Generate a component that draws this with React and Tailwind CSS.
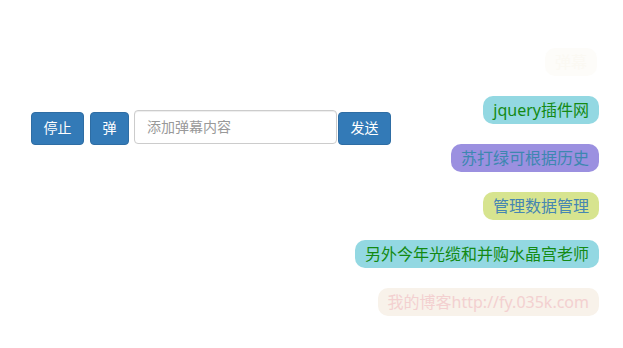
import React from 'react';

const font = { fontFamily: '"Liberation Sans", "Noto Sans CJK SC", sans-serif' };
const pillFont = { fontFamily: '"Noto Sans", "Noto Sans CJK SC", sans-serif' };

const danmaku = [
  { text: '弹幕', cls: 'bg-[#fdfcf9] text-[#fbf9f3] mr-[2px]' },
  { text: 'jquery插件网', cls: 'bg-[#93d8e2] text-[#148a14]' },
  { text: '苏打绿可根据历史', cls: 'bg-[#9b90e0] text-[#3d87b0]' },
  { text: '管理数据管理', cls: 'bg-[#d7e48f] text-[#4686b2]' },
  { text: '另外今年光缆和并购水晶宫老师', cls: 'bg-[#93d8e2] text-[#148a14]' },
  { text: '我的博客http://fy.035k.com', cls: 'bg-[#f8f2ea] text-[#f3d0d0]' },
];

export default function App() {
  return (
    <div className="relative w-[623px] h-[348px] bg-white overflow-hidden" style={font}>
      <div className="flex items-start pt-[110px] pl-[31px]">
        <button
          type="button"
          className="mt-[2px] h-[33px] w-[53px] rounded bg-[#337ab7] border border-[#2e6da4] text-white text-[14px]"
        >
          停止
        </button>
        <button
          type="button"
          className="mt-[2px] ml-[6px] h-[33px] w-[39px] rounded bg-[#337ab7] border border-[#2e6da4] text-white text-[14px]"
        >
          弹
        </button>
        <input
          type="text"
          placeholder="添加弹幕内容"
          className="ml-[5px] h-[34px] w-[203px] rounded border border-[#cccccc] px-3 text-[14px] text-[#555] placeholder:text-[#999] outline-none shadow-[inset_0_1px_1px_rgba(0,0,0,0.075)]"
        />
        <button
          type="button"
          className="mt-[2px] ml-[1px] h-[33px] w-[53px] rounded bg-[#337ab7] border border-[#2e6da4] text-white text-[14px]"
        >
          发送
        </button>
      </div>

      {/* danmaku layer floats over the page */}
      <div className="absolute right-[24px] top-[48px] flex flex-col items-end gap-5" style={pillFont}>
        {danmaku.map((d) => (
          <div
            key={d.text}
            className={`h-[28px] leading-[28px] rounded-[10px] px-[10px] text-[16px] whitespace-nowrap ${d.cls}`}
          >
            {d.text}
          </div>
        ))}
      </div>
    </div>
  );
}
